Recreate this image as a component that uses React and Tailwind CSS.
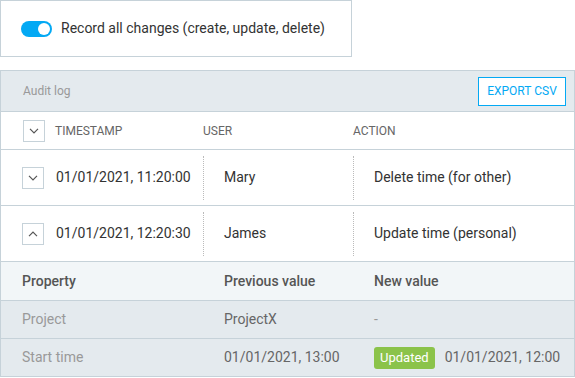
import React, { useState } from 'react';

function Chevron({ up }) {
  return (
    <span className="flex h-[22px] w-[22px] items-center justify-center border border-[#c6d2d9] bg-white">
      <svg width="10" height="6" viewBox="0 0 10 6" fill="none">
        <path d={up ? 'M1 5.2L5 1.2L9 5.2' : 'M1 0.8L5 4.8L9 0.8'} stroke="#555" strokeWidth="1.2" />
      </svg>
    </span>
  );
}

const rows = [
  { time: '01/01/2021, 11:20:00', user: 'Mary', action: 'Delete time (for other)', open: false },
  { time: '01/01/2021, 12:20:30', user: 'James', action: 'Update time (personal)', open: true },
];

export default function App() {
  const [on, setOn] = useState(true);

  return (
    <div className="min-h-screen bg-white text-[#333]" style={{ fontFamily: 'Roboto, "Liberation Sans", sans-serif' }}>
      {/* toggle card */}
      <div className="flex h-[57px] w-[352px] items-center gap-[9px] border border-[#c6d2d9] pl-[20px]">
        <button
          onClick={() => setOn(!on)}
          className={`relative h-[16px] w-[31px] rounded-full ${on ? 'bg-[#03a9f4]' : 'bg-[#ccc]'}`}
        >
          <span className={`absolute top-[2px] h-[12px] w-[12px] rounded-full bg-white ${on ? 'right-[2px]' : 'left-[2px]'}`} />
        </button>
        <span className="text-[14px] text-[#333]">Record all changes (create, update, delete)</span>
      </div>

      {/* audit log */}
      <div className="mt-[13px] border border-[#c6d2d9]">
        <div className="flex h-[40px] items-center justify-between bg-[#e4eaee] pl-[22px] pr-[8px]">
          <span className="text-[12px] text-[#999]">Audit log</span>
          <button className="h-[29px] w-[88px] border border-[#03a9f4] bg-white text-[12px] text-[#03a9f4]">
            EXPORT CSV
          </button>
        </div>

        <div className="grid h-[38px] grid-cols-[202px_150px_1fr] items-center border-t border-[#c6d2d9] text-[12px] text-[#666]">
          <div className="flex items-center gap-[10px] pl-[22px]">
            <Chevron />
            <span>TIMESTAMP</span>
          </div>
          <div>USER</div>
          <div>ACTION</div>
        </div>

        {rows.map((r) => (
          <div key={r.time} className="grid h-[56px] grid-cols-[202px_150px_1fr] items-center border-t border-[#c6d2d9] text-[14px] text-[#333]">
            <div className="flex items-center gap-[12px] pl-[21px]">
              <Chevron up={r.open} />
              <span>{r.time}</span>
            </div>
            <div className="flex h-[44px] items-center border-l border-dotted border-[#bbb] pl-[20px]">{r.user}</div>
            <div className="flex h-[44px] items-center border-l border-dotted border-[#bbb] pl-[20px]">{r.action}</div>
          </div>
        ))}

        <div className="grid h-[39px] grid-cols-[202px_150px_1fr] items-center border-t border-[#c6d2d9] bg-[#f2f6f8] text-[14px] font-medium text-[#555]">
          <div className="pl-[21px]">Property</div>
          <div className="pl-[21px]">Previous value</div>
          <div className="pl-[21px]">New value</div>
        </div>
        <div className="grid h-[38px] grid-cols-[202px_150px_1fr] items-center border-t border-[#c6d2d9] bg-[#e4eaee] text-[14px]">
          <div className="pl-[21px] text-[#999]">Project</div>
          <div className="pl-[21px] text-[#666]">ProjectX</div>
          <div className="pl-[21px] text-[#999]">-</div>
        </div>
        <div className="grid h-[38px] grid-cols-[202px_150px_1fr] items-center border-t border-[#c6d2d9] bg-[#e4eaee] text-[14px]">
          <div className="pl-[21px] text-[#999]">Start time</div>
          <div className="pl-[21px] text-[#666]">01/01/2021, 13:00</div>
          <div className="flex items-center gap-[10px] pl-[21px] text-[#666]">
            <span className="flex h-[22px] items-center rounded-[3px] bg-[#8bc34a] px-[6px] text-[13px] text-white">Updated</span>
            <span>01/01/2021, 12:00</span>
          </div>
        </div>
      </div>
    </div>
  );
}
